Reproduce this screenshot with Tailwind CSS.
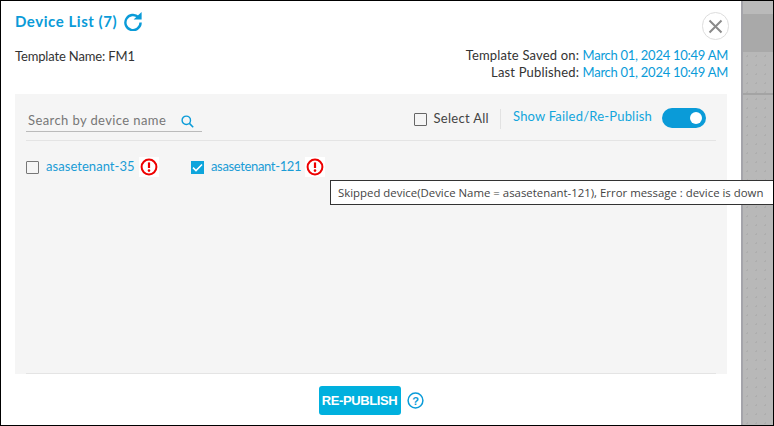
<!DOCTYPE html>
<html lang="en">
<head>
  <meta charset="UTF-8">
  <script src="https://cdn.jsdelivr.net/npm/@tailwindcss/browser@4"></script>
  <title>Device List</title>
</head>
<body class="m-0 bg-white">
  <div class="relative w-[774px] h-[426px] overflow-hidden flex border border-black font-['Lato','Open_Sans',sans-serif] text-[13px] text-[#333]">
    <!-- modal -->
    <div class="w-[740px] h-full bg-white flex flex-col">
      <div class="flex justify-between h-[93px] pl-[14px] pr-[13px]">
        <div class="flex flex-col">
          <div class="flex items-center gap-[7px] mt-[9px] h-[22px]">
            <span class="text-[15px] font-bold text-[#0a9bd8] tracking-[0.55px]">Device List (7)</span>
            <svg width="18" height="19" viewBox="0 0 18 19" fill="none">
              <path d="M14.4 5.2A7.6 7.6 0 1 0 16.6 10.5" stroke="#0a9bd8" stroke-width="2.4"/>
              <path d="M9.6 7.6h8V0z" fill="#0a9bd8"/>
            </svg>
          </div>
          <div class="mt-[16px] leading-[16px] tracking-[-0.15px]">Template Name: FM1</div>
        </div>
        <div class="flex flex-col items-end">
          <button class="w-[27px] h-[28px] mt-[11px] mr-[-1px] rounded-full border border-[#ddd] flex items-center justify-center bg-white">
            <svg width="15" height="15" viewBox="0 0 15 15"><path d="M1.5 1.5l12 12M13.5 1.5l-12 12" stroke="#8a8a8a" stroke-width="2"/></svg>
          </button>
          <div class="mt-[7px] leading-[17px] text-right tracking-[0.17px]">Template Saved on: <span class="text-[#0a9bd8] tracking-[-0.27px]">March 01, 2024 10:49 AM</span></div>
          <div class="leading-[17px] text-right tracking-[0.17px]">Last Published: <span class="text-[#0a9bd8] tracking-[-0.27px]">March 01, 2024 10:49 AM</span></div>
        </div>
      </div>

      <!-- panel -->
      <div class="ml-[14px] w-[712px] h-[280px] bg-[#f5f5f5] px-[11px] flex flex-col">
        <div class="flex items-center justify-between h-[47px] border-b border-[#e4e4e4]">
          <div class="flex items-center justify-between w-[176px] h-[20px] mt-[10px] pl-[2px] pr-[8px] border-b border-[#bbb] text-[#777]">
            <span class="tracking-[0.4px] -mt-[2px] whitespace-nowrap">Search by device name</span>
            <svg class="shrink-0" width="13" height="13" viewBox="0 0 13 13" fill="none">
              <circle cx="5.3" cy="5.3" r="4.2" stroke="#0a9bd8" stroke-width="1.4"/>
              <path d="M8.4 8.4l3.8 3.8" stroke="#0a9bd8" stroke-width="1.5"/>
            </svg>
          </div>
          <div class="flex items-center mt-[4px] mr-[10px]">
            <span class="w-[13px] h-[13px] border border-[#666] rounded-[1px] bg-[#f5f5f5] mr-[7px]"></span>
            <span class="text-[#444] mr-[11px] tracking-[0.3px]">Select All</span>
            <span class="w-px h-[20px] bg-[#e2e2e2] mr-[12px]"></span>
            <span class="text-[#12a5dc] mr-[10px] -mt-[4px] tracking-[0.2px]">Show Failed/Re-Publish</span>
            <span class="w-[44px] h-[20px] -mt-[3px] rounded-full bg-[#0a9bd8] flex items-center justify-end pr-[4px]">
              <span class="w-[12px] h-[12px] rounded-full bg-white"></span>
            </span>
          </div>
        </div>

        <div class="flex items-center mt-[16px]">
          <span class="w-[13px] h-[13px] border border-[#777] rounded-[1px] mr-[7px]"></span>
          <span class="text-[#1a9cd6] w-[89px] tracking-[0.05px]">asasetenant-35</span>
          <svg class="ml-[4px]" width="20" height="20" viewBox="0 0 20 20">
            <rect width="20" height="20" fill="#fff"/>
            <circle cx="10" cy="10" r="7.4" fill="none" stroke="#ee0000" stroke-width="2"/>
            <path d="M10 5.4v5.6" stroke="#ee0000" stroke-width="2.2"/>
            <circle cx="10" cy="13.6" r="1.3" fill="#ee0000"/>
          </svg>
          <span class="w-[13px] h-[13px] ml-[32px] mr-[7px] bg-[#0ea5dc] flex items-center justify-center">
            <svg width="11" height="9" viewBox="0 0 11 9" fill="none"><path d="M1 4.6l3 3 6-6.2" stroke="#fff" stroke-width="1.5"/></svg>
          </span>
          <span class="text-[#1a9cd6] w-[90px] tracking-[-0.35px] whitespace-nowrap">asasetenant-121</span>
          <svg class="ml-[4px]" width="20" height="20" viewBox="0 0 20 20">
            <rect width="20" height="20" fill="#fff"/>
            <circle cx="10" cy="10" r="7.4" fill="none" stroke="#ee0000" stroke-width="2"/>
            <path d="M10 5.4v5.6" stroke="#ee0000" stroke-width="2.2"/>
            <circle cx="10" cy="13.6" r="1.3" fill="#ee0000"/>
          </svg>
        </div>
        <div class="mt-auto h-px bg-[#e4e4e4]"></div>
      </div>

      <!-- footer -->
      <div class="flex-1 flex items-center justify-center gap-[6px]">
        <button class="w-[82px] h-[29px] rounded-[3px] bg-[#00b0de] text-white font-bold text-[13px] tracking-[-0.4px] font-['Liberation_Sans',sans-serif] mt-[2px]">RE-PUBLISH</button>
        <svg class="mt-[2px]" width="17" height="17" viewBox="0 0 17 17" fill="none">
          <circle cx="8.5" cy="8.5" r="7.4" stroke="#0a9bd8" stroke-width="1.5"/>
          <text x="8.5" y="12.5" text-anchor="middle" font-family="Liberation Sans" font-weight="700" font-size="11" fill="#0a9bd8">?</text>
        </svg>
      </div>
    </div>

    <!-- page behind the modal -->
    <div class="flex-1 flex flex-col border-l-2 border-[#a4a4aa]">
      <div class="h-[13px] bg-[#bababa]"></div>
      <div class="h-[38px] bg-[#a9a9a9]"></div>
      <div class="h-[41px] bg-[#b8b8b8] bg-[radial-gradient(#aeaeae_1px,transparent_1px)] bg-[size:9px_9px]"></div>
      <div class="h-[2px] bg-[#a4a4a4]"></div>
      <div class="flex-1 bg-[#b8b8b8] bg-[radial-gradient(#aeaeae_1px,transparent_1px)] bg-[size:9px_9px]"></div>
    </div>

    <!-- tooltip -->
    <div class="absolute left-[329px] top-[179px] w-[444px] h-[25px] bg-white border border-[#333] pl-[7px] leading-[23px] text-[11.4px] text-[#444] whitespace-nowrap font-['Open_Sans',sans-serif]">Skipped device(Device Name = asasetenant-121), Error message : device is down</div>
  </div>
</body>
</html>
